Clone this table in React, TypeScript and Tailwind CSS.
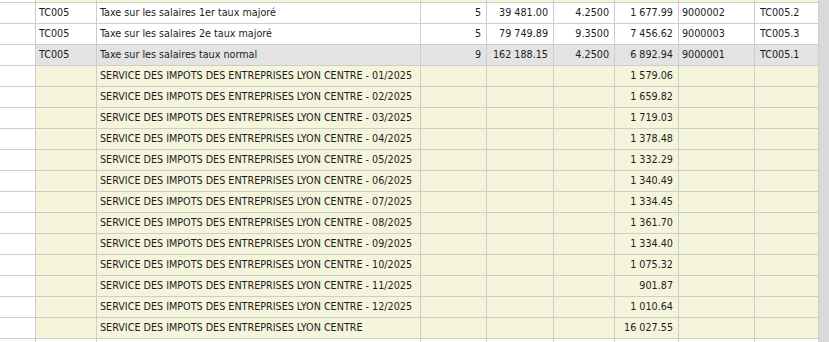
type Row = {
  code: string;
  label: string;
  qty: string;
  base: string;
  rate: string;
  amount: string;
  account: string;
  ref: string;
  tone: "white" | "grey" | "beige";
};

const months = [
  "1 579.06",
  "1 659.82",
  "1 719.03",
  "1 378.48",
  "1 332.29",
  "1 340.49",
  "1 334.45",
  "1 361.70",
  "1 334.40",
  "1 075.32",
  "901.87",
  "1 010.64",
];

const rows: Row[] = [
  { code: "", label: "", qty: "", base: "", rate: "", amount: "", account: "", ref: "", tone: "beige" },
  { code: "TC005", label: "Taxe sur les salaires 1er taux majoré", qty: "5", base: "39 481.00", rate: "4.2500", amount: "1 677.99", account: "9000002", ref: "TC005.2", tone: "white" },
  { code: "TC005", label: "Taxe sur les salaires 2e taux majoré", qty: "5", base: "79 749.89", rate: "9.3500", amount: "7 456.62", account: "9000003", ref: "TC005.3", tone: "white" },
  { code: "TC005", label: "Taxe sur les salaires taux normal", qty: "9", base: "162 188.15", rate: "4.2500", amount: "6 892.94", account: "9000001", ref: "TC005.1", tone: "grey" },
  ...months.map((m, i): Row => ({
    code: "",
    label: `SERVICE DES IMPOTS DES ENTREPRISES LYON CENTRE - ${String(i + 1).padStart(2, "0")}/2025`,
    qty: "",
    base: "",
    rate: "",
    amount: m,
    account: "",
    ref: "",
    tone: "beige",
  })),
  { code: "", label: "SERVICE DES IMPOTS DES ENTREPRISES LYON CENTRE", qty: "", base: "", rate: "", amount: "16 027.55", account: "", ref: "", tone: "beige" },
  { code: "", label: "", qty: "", base: "", rate: "", amount: "", account: "", ref: "", tone: "white" },
];

const toneBg = {
  white: "bg-white",
  grey: "bg-[#e3e3e3]",
  beige: "bg-[#f5f5dc]",
};

const Cell = ({
  children,
  bg,
  right,
  extra = "",
}: {
  children?: React.ReactNode;
  bg: string;
  right?: boolean;
  extra?: string;
}) => (
  <div
    className={`${bg} border-r border-b border-[#cdcdcd] flex items-center overflow-hidden whitespace-nowrap ${
      right ? "justify-end pr-[5px]" : "pl-[3px]"
    } ${extra}`}
  >
    {children}
  </div>
);

export default function App() {
  return (
    <div className="w-[829px] h-[342px] overflow-hidden bg-white font-['DejaVu_Sans_Condensed','DejaVu_Sans',sans-serif] text-[10.7px] text-[#1c1c1c]">
      <div className="grid grid-cols-[36px_61px_324px_66px_67px_61px_64px_76px_64px_10px] -mt-[18px] auto-rows-[21px]">
        {rows.map((r, i) => {
          const bg = toneBg[r.tone];
          return (
            <div key={i} className="contents">
              <Cell bg="bg-white" />
              <Cell bg={bg}>{r.code}</Cell>
              <Cell bg={bg}>{r.label}</Cell>
              <Cell bg={bg} right extra="pr-[4px]">{r.qty}</Cell>
              <Cell bg={bg} right>{r.base}</Cell>
              <Cell bg={bg} right>{r.rate}</Cell>
              <Cell bg={bg} right>{r.amount}</Cell>
              <Cell bg={bg}>{r.account}</Cell>
              <Cell bg={bg} extra="pl-[5px]">{r.ref}</Cell>
              <div className="bg-[#d9d9d9]" />
            </div>
          );
        })}
      </div>
    </div>
  );
}
